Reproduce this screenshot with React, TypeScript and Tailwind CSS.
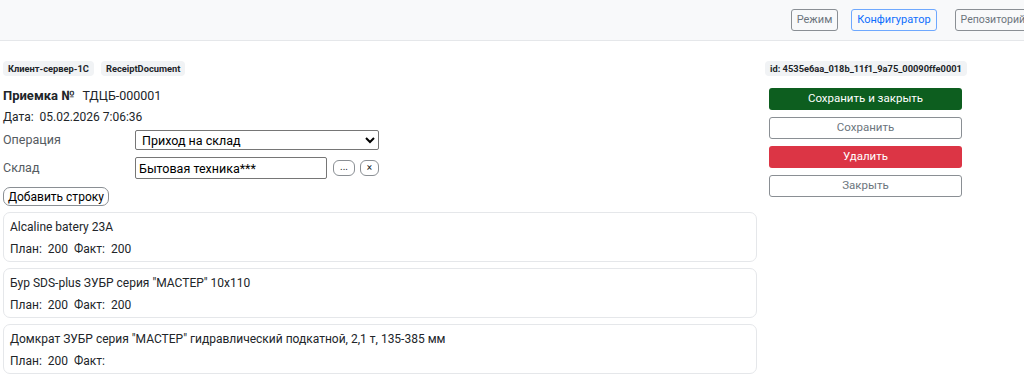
import React from "react";

const rows = [
  { name: "Alcaline batery 23A", plan: "200", fact: "200" },
  { name: 'Бур SDS-plus ЗУБР серия "МАСТЕР" 10x110', plan: "200", fact: "200" },
  { name: 'Домкрат ЗУБР серия "МАСТЕР" гидравлический подкатной, 2,1 т, 135-385 мм', plan: "200", fact: "" },
];

function Badge({ children }: { children: React.ReactNode }) {
  return (
    <span className="inline-flex h-[15px] items-center whitespace-nowrap rounded-[4px] bg-[#f1f3f5] px-[5px] text-[9.3px] font-bold leading-none text-[#212529]">
      {children}
    </span>
  );
}

function ItemCard({ name, plan, fact }: { name: string; plan: string; fact: string }) {
  return (
    <div className="flex h-[50px] flex-col rounded-[7px] border border-[#e5e7ea] px-[6px] pt-[6px] text-[12px] text-[#212529]">
      <div className="leading-[16px]">{name}</div>
      <div className="mt-[6px] leading-[16px]">
        План:&nbsp; {plan}&nbsp;&nbsp;Факт:&nbsp; {fact}
      </div>
    </div>
  );
}

export default function App() {
  return (
    <div className="min-h-[379px] w-[1024px] overflow-hidden bg-white font-['Roboto',sans-serif] text-[#212529]">
      <div className="flex h-[41px] items-center justify-end gap-[13px] overflow-hidden border-b border-[#e5e7ea] bg-[#f8f9fa]">
        <button className="h-[22px] shrink-0 rounded-[3px] border border-[#8a8f94] px-[5px] text-[11px] text-[#6c757d]">
          Режим
        </button>
        <button className="h-[22px] shrink-0 rounded-[3px] border border-[#6ea8fe] px-[5px] text-[11px] text-[#0d6efd]">
          Конфигуратор
        </button>
        <button className="-mr-[7px] ml-[5px] h-[22px] shrink-0 whitespace-nowrap rounded-[3px] border border-[#8a8f94] px-[5px] text-[10.5px] text-[#6c757d]">
          Репозиторий
        </button>
      </div>

      <div className="flex gap-[8px] pl-[3px] pt-[20px]">
        <div className="flex w-[754px] flex-col">
          <div className="flex gap-[7px]">
            <Badge>Клиент-сервер-1С</Badge>
            <Badge>ReceiptDocument</Badge>
          </div>
          <div className="mt-[11px] flex items-baseline text-[13px] leading-[18px]">
            <span className="font-bold">Приемка №</span>
            <span className="ml-[8px] text-[12.5px]">ТДЦБ-000001</span>
          </div>
          <div className="mt-[4px] text-[12px] leading-[16px]">Дата:&nbsp; 05.02.2026 7:06:36</div>
          <div className="mt-[5px] flex items-center">
            <span className="w-[132px] text-[12.5px] text-[#555b61]">Операция</span>
            <select className="h-[20px] w-[244px] rounded-[2px] border border-[#767676] bg-white px-[2px] text-[12.5px] text-black">
              <option>Приход на склад</option>
            </select>
          </div>
          <div className="mt-[7px] flex items-center">
            <span className="w-[132px] text-[12.5px] text-[#555b61]">Склад</span>
            <input
              readOnly
              value="Бытовая техника***"
              className="h-[22px] w-[192px] rounded-[2px] border border-[#767676] px-[3px] text-[12.5px] text-black"
            />
            <button className="ml-[6px] flex h-[16px] w-[22px] items-center justify-center rounded-[6px] border border-[#8a8f94] pb-[3px] text-[10px] leading-none">
              ...
            </button>
            <button className="ml-[5px] flex h-[16px] w-[19px] items-center justify-center rounded-[6px] border border-[#8a8f94] text-[10px] leading-none">
              ×
            </button>
          </div>
          <div className="mt-[8px] flex">
            <button className="h-[19px] rounded-[7px] border border-[#8a8f94] px-[4px] text-[12px] leading-none text-black">
              Добавить строку
            </button>
          </div>
          <div className="mt-[6px] flex flex-col gap-[6px]">
            {rows.map((r, i) => (
              <ItemCard key={i} {...r} />
            ))}
          </div>
        </div>

        <div className="flex w-[200px] flex-col">
          <div className="flex">
            <Badge>id: 4535e6aa_018b_11f1_9a75_00090ffe0001</Badge>
          </div>
          <div className="ml-[4px] mt-[12px] flex w-[193px] flex-col gap-[7px]">
            <button className="h-[22px] rounded-[3px] bg-[#0d5e1f] text-[11.5px] text-white">Сохранить и закрыть</button>
            <button className="h-[22px] rounded-[3px] border border-[#8a8f94] bg-white text-[11.5px] text-[#6c757d]">Сохранить</button>
            <button className="h-[22px] rounded-[3px] bg-[#dc3545] text-[11.5px] text-white">Удалить</button>
            <button className="h-[22px] rounded-[3px] border border-[#8a8f94] bg-white text-[11.5px] text-[#6c757d]">Закрыть</button>
          </div>
        </div>
      </div>
    </div>
  );
}
